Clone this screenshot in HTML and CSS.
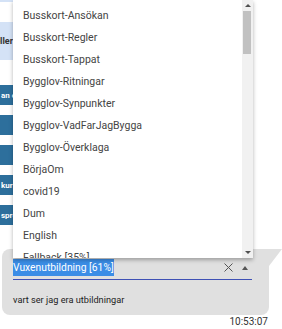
FILE: index.html
```html
<!DOCTYPE html>
<html lang="sv">
<head>
  <meta charset="UTF-8" />
  <meta name="viewport" content="width=device-width, initial-scale=1" />
  <title>Chatt</title>
  <link rel="stylesheet" href="styles.css">
</head>
<body>
  <div class="topline"></div>

  <div class="side">
    <div class="hint"><span>Välj eller</span></div>
    <div class="chip">an om</div>
    <div class="chip"></div>
    <div class="chip"></div>
    <div class="chip">kurser</div>
    <div class="chip">sprov</div>
  </div>

  <div class="bubble">
    <div class="field">
      <span class="value"><span class="sel">Vuxenutbildning [61%]</span></span>
      <svg class="clear" width="9" height="9" viewBox="0 0 9 9"><path d="M0.5 0.5L8.5 8.5M8.5 0.5L0.5 8.5" stroke="#555" stroke-width="1"/></svg>
      <span class="caret"></span>
    </div>
    <p class="msg">vart ser jag era utbildningar</p>
  </div>
  <div class="time">10:53:07</div>

  <div class="dropdown">
    <ul class="options">
      <li>Busskort-Ansökan</li>
      <li>Busskort-Regler</li>
      <li>Busskort-Tappat</li>
      <li>Bygglov-Ritningar</li>
      <li>Bygglov-Synpunkter</li>
      <li>Bygglov-VadFarJagBygga</li>
      <li>Bygglov-Överklaga</li>
      <li>BörjaOm</li>
      <li>covid19</li>
      <li>Dum</li>
      <li>English</li>
      <li>Fallback [35%]</li>
    </ul>
    <div class="scrollbar">
      <span class="arrow up"></span>
      <span class="thumb"></span>
      <span class="arrow down"></span>
    </div>
  </div>
</body>
</html>
```

FILE: styles.css
```css
body { margin: 0; font-family: Roboto, "Liberation Sans", sans-serif; background: #fff; position: relative; width: 282px; height: 329px; overflow: hidden; }
.topline { width: 208px; height: 2px; background: #d4e2f6; }

.side { width: 13px; overflow: hidden; margin-top: 20px; display: flex; flex-direction: column; }
.hint { height: 38px; background: #d4e2f6; display: flex; align-items: center; justify-content: flex-end; font-size: 9px; font-weight: bold; color: #333; white-space: nowrap; overflow: hidden; }
.chip { height: 20px; margin-top: 10px; background: #2d6f9c; color: #fff; font-size: 8px; font-weight: bold; white-space: nowrap; display: flex; align-items: center; padding-left: 1px; }
.hint + .chip { margin-top: 25px; }

.bubble { position: relative; margin: 24px 0 0 2px; width: 267px; height: 66px; background: #e0e0e0; border-radius: 8px 0 8px 8px; }
.bubble::after { content: ""; position: absolute; right: -13px; top: 0; border-top: 17px solid #e0e0e0; border-right: 13px solid transparent; }
.field { display: flex; align-items: center; margin: 0 17px 0 11px; height: 31px; border-bottom: 1.5px solid #3f51b5; box-sizing: border-box; padding-top: 7px; }
.value { flex: 1; font-size: 10.3px; }
.sel { background: #3b8de6; color: #fff; padding: 2px 0; }
.clear { margin-right: 9px; }
.caret { width: 0; height: 0; border-left: 3px solid transparent; border-right: 3px solid transparent; border-bottom: 4px solid #555; margin-right: 4px; }
.msg { margin: 14px 0 0 11px; font-size: 9.2px; color: #222; }
.time { width: 268px; text-align: right; font-size: 10px; color: #333; margin-top: 1px; }

.dropdown { position: absolute; left: 13px; top: 0; width: 240px; height: 258px; background: #fff; box-shadow: 0 2px 4px rgba(0,0,0,.3); overflow: hidden; display: flex; }
.options { list-style: none; margin: 0; padding: 5px 0 0; flex: 1; }
.options li { height: 22px; line-height: 22px; padding-left: 10px; font-size: 10.5px; color: #444; white-space: nowrap; }
.scrollbar { width: 11px; background: #f1f1f1; position: relative; }
.thumb { position: absolute; left: 1px; top: 11px; width: 8px; height: 43px; background: #c1c1c1; }
.arrow { position: absolute; left: 3px; width: 0; height: 0; border-left: 3px solid transparent; border-right: 3px solid transparent; }
.arrow.up { top: 4px; border-bottom: 3px solid #505050; }
.arrow.down { bottom: 4px; border-top: 3px solid #505050; }
```
